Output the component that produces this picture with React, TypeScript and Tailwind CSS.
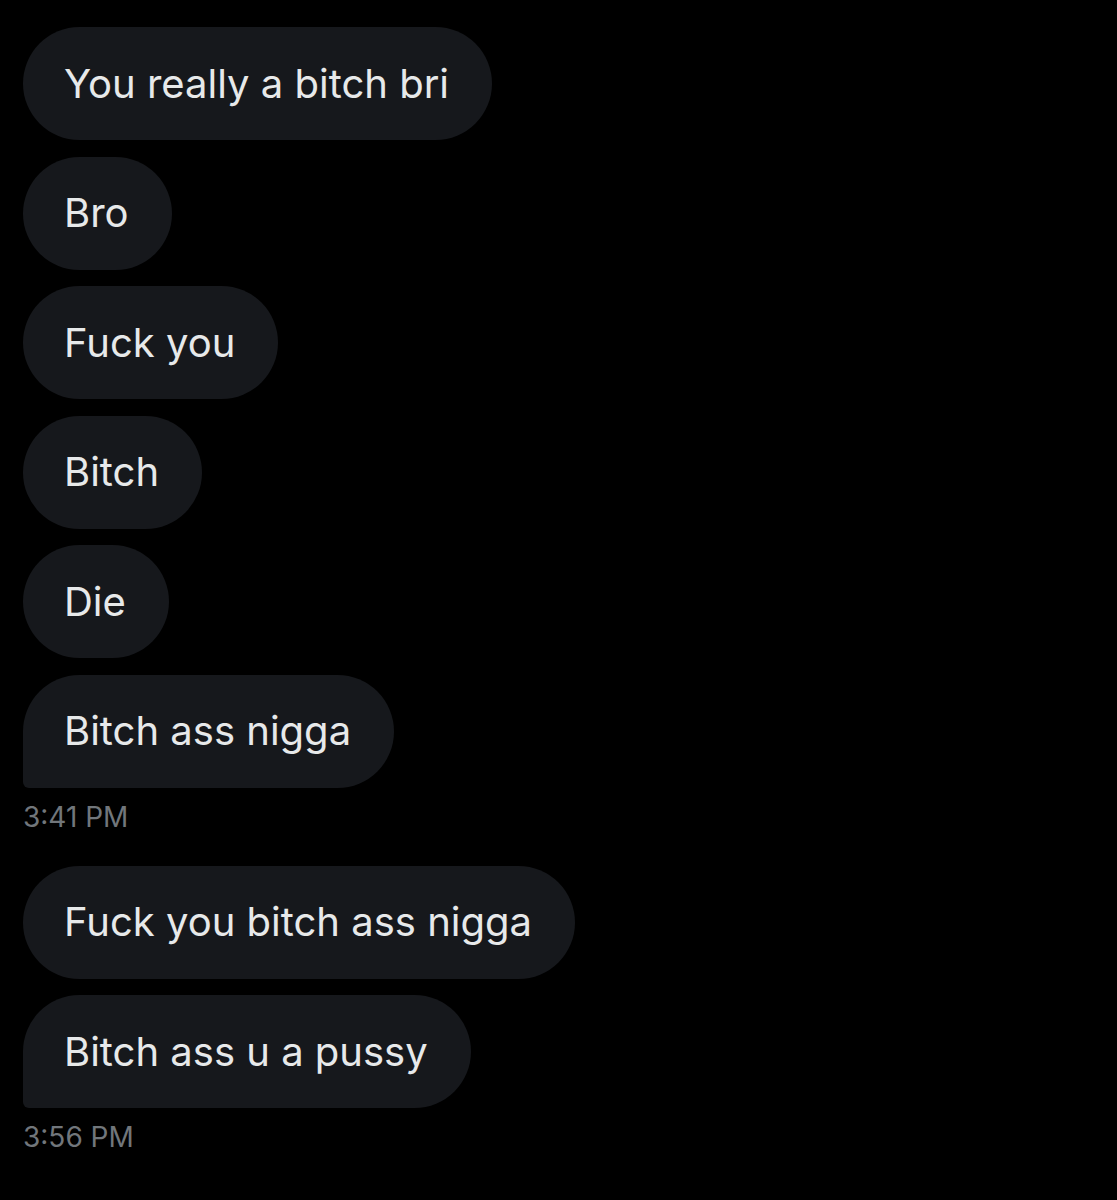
const groups: { messages: string[]; time: string }[] = [
  {
    messages: ["You really a bitch bri", "Bro", "Fuck you", "Bitch", "Die", "Bitch ass nigga"],
    time: "3:41 PM",
  },
  {
    messages: ["Fuck you bitch ass nigga", "Bitch ass u a pussy"],
    time: "3:56 PM",
  },
]

function Bubble({ text, last }: { text: string; last: boolean }) {
  return (
    <div
      className={
        "flex h-[113px] items-center bg-[#16181c] pl-[41px] pr-[43px] text-[40px] text-[#e7e9ea] " +
        (last ? "rounded-[57px] rounded-bl-[6px]" : "rounded-[57px]")
      }
    >
      {text}
    </div>
  )
}

export default function App() {
  return (
    <div className="min-h-[1200px] w-full bg-black pl-[23px] pt-[27px] font-['Inter',sans-serif]">
      <div className="flex flex-col items-start">
        {groups.map((group, gi) => (
          <div key={gi} className="mb-[26px] flex flex-col items-start gap-[16.6px]">
            {group.messages.map((m, i) => (
              <Bubble key={i} text={m} last={i === group.messages.length - 1} />
            ))}
            <p className="-mt-[11px] text-[28px] leading-[46px] text-[#71767b]">{group.time}</p>
          </div>
        ))}
      </div>
    </div>
  )
}
